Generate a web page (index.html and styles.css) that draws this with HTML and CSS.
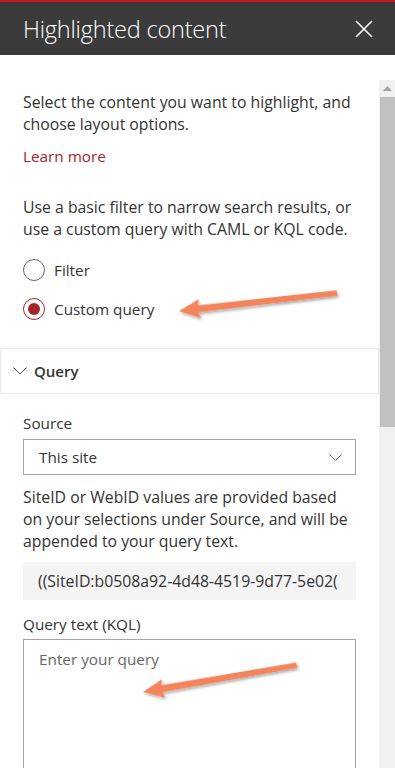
FILE: index.html
```html
<!DOCTYPE html>
<html lang="en">
<head>
    <meta charset="UTF-8">
    <meta name="viewport" content="width=device-width, initial-scale=1.0">
    <title>Highlighted content</title>
    <link rel="stylesheet" href="styles.css">
</head>
<body>
    <div class="panel">
        <div class="panel-header">
            <h1 class="panel-title">Highlighted content</h1>
            <svg class="close-icon" width="18" height="18" viewBox="0 0 18 18">
                <path d="M1 1 L17 17 M17 1 L1 17" stroke="#fff" stroke-width="1.6" fill="none"/>
            </svg>
        </div>
        <div class="panel-body">
            <div class="content">
                <p class="text intro">Select the content you want to highlight, and choose layout options.</p>
                <a class="learn-more" href="#">Learn more</a>
                <p class="text filter-note">Use a basic filter to narrow search results, or use a custom query with CAML or KQL code.</p>

                <div class="radio-group">
                    <div class="radio">
                        <span class="radio-circle"></span>
                        <span class="radio-label">Filter</span>
                    </div>
                    <div class="radio checked">
                        <span class="radio-circle"></span>
                        <span class="radio-label">Custom query</span>
                    </div>
                </div>

                <div class="section-head">
                    <svg class="section-chevron" width="14" height="8" viewBox="0 0 14 8">
                        <path d="M0.5 0.5 L7 7 L13.5 0.5" stroke="#555" stroke-width="1" fill="none"/>
                    </svg>
                    <span class="section-title">Query</span>
                </div>

                <div class="fields">
                    <label class="field-label">Source</label>
                    <div class="dropdown">
                        <span>This site</span>
                        <svg width="13" height="7" viewBox="0 0 13 7">
                            <path d="M0.5 0.5 L6.5 6.5 L12.5 0.5" stroke="#666" stroke-width="1" fill="none"/>
                        </svg>
                    </div>
                    <p class="text site-note">SiteID or WebID values are provided based on your selections under Source, and will be appended to your query text.</p>
                    <div class="readonly">((SiteID:b0508a92-4d48-4519-9d77-5e02(</div>
                    <label class="field-label kql-label">Query text (KQL)</label>
                    <div class="textarea">Enter your query</div>
                </div>
            </div>
            <div class="scrollbar">
                <div class="scroll-up">
                    <svg width="9" height="5" viewBox="0 0 9 5"><path d="M0 5 L4.5 0 L9 5 Z" fill="#a3a3a3"/></svg>
                </div>
                <div class="scroll-thumb"></div>
            </div>
        </div>

        <svg class="callouts" width="395" height="768" viewBox="0 0 395 768">
            <defs>
                <filter id="shade" x="-10%" y="-50%" width="120%" height="200%">
                    <feDropShadow dx="1" dy="2" stdDeviation="1.5" flood-color="#000" flood-opacity="0.35"/>
                </filter>
            </defs>
            <g transform="translate(179 311) rotate(-6.5)" filter="url(#shade)">
                <polygon points="0,0 21,-9.5 19,-3.4 159,-2.8 159,2.8 19,3.4 21,9.5" fill="#f4845c"/>
            </g>
            <g transform="translate(143 692) rotate(-9.9)" filter="url(#shade)">
                <polygon points="0,0 21,-9.5 19,-3.4 156,-2.8 156,2.8 19,3.4 21,9.5" fill="#f4845c"/>
            </g>
        </svg>
    </div>
</body>
</html>
```

FILE: styles.css
```css
html, body {
    margin: 0;
    height: 100%;
    overflow: hidden;
    background-color: #ffffff;
    font-family: "Open Sans", "Noto Sans", sans-serif;
}
.panel {
    position: relative;
    width: 395px;
    height: 768px;
    overflow: hidden;
}
.panel-header {
    display: flex;
    justify-content: space-between;
    align-items: center;
    height: 53px;
    border-top: 2px solid #c8171e;
    background-color: #3b3b3b;
    padding: 0 22px 0 23px;
}
.panel-title {
    margin: 0;
    font-size: 23.5px;
    font-weight: 300;
    color: #ffffff;
    letter-spacing: -0.2px;
}
.close-icon {
    display: block;
}
.panel-body {
    display: flex;
}
.content {
    width: 379px;
    padding-top: 36px;
}
.scrollbar {
    width: 16px;
    margin-top: 25px;
    height: 700px;
    background-color: #f0f0f0;
}
.scroll-up {
    display: flex;
    justify-content: center;
    align-items: center;
    height: 17px;
}
.scroll-thumb {
    height: 330px;
    margin-left: 1px;
    background-color: #c1c1c1;
}
.text {
    margin: 0;
    padding: 0 23px;
    font-size: 15.8px;
    line-height: 22px;
    color: #333333;
}
.learn-more {
    display: block;
    margin: 10px 23px 0;
    font-size: 15.3px;
    line-height: 22px;
    color: #a4262c;
    text-decoration: none;
}
.filter-note {
    margin-top: 29px;
}
.radio-group {
    display: flex;
    flex-direction: column;
    gap: 17px;
    margin-top: 19px;
    padding: 0 23px;
}
.radio {
    display: flex;
    align-items: center;
    gap: 9px;
    height: 22px;
}
.radio-circle {
    box-sizing: border-box;
    width: 22px;
    height: 22px;
    border: 1.5px solid #666666;
    border-radius: 50%;
    display: flex;
    justify-content: center;
    align-items: center;
}
.radio.checked .radio-circle {
    border-color: #a4262c;
}
.radio.checked .radio-circle::after {
    content: "";
    width: 12px;
    height: 12px;
    border-radius: 50%;
    background-color: #a4262c;
}
.radio-label {
    font-size: 15.3px;
    color: #333333;
}
.section-head {
    display: flex;
    align-items: center;
    gap: 7px;
    height: 44px;
    margin-top: 28px;
    padding-left: 12px;
    border: 1px solid #eaeaea;
}
.section-title {
    font-size: 15px;
    font-weight: 600;
    color: #333333;
}
.fields {
    display: flex;
    flex-direction: column;
    padding: 18px 23px 0;
}
.field-label {
    font-size: 15.3px;
    line-height: 22px;
    color: #333333;
}
.dropdown {
    display: flex;
    justify-content: space-between;
    align-items: center;
    height: 34px;
    margin-top: 5px;
    padding: 0 13px 0 15px;
    border: 1px solid #a6a6a6;
    font-size: 15.3px;
    color: #333333;
}
.site-note {
    margin-top: 11px;
    padding: 0;
}
.readonly {
    height: 38px;
    margin-top: 10px;
    padding: 0 0 0 15px;
    line-height: 38px;
    background-color: #f4f4f4;
    font-size: 15.8px;
    color: #333333;
    white-space: nowrap;
    overflow: hidden;
}
.kql-label {
    margin-top: 13px;
}
.textarea {
    height: 200px;
    margin-top: 4px;
    padding: 8px 15px;
    border: 1px solid #a6a6a6;
    font-size: 15.3px;
    line-height: 22px;
    color: #666666;
}
.callouts {
    position: absolute;
    top: 0;
    left: 0;
    pointer-events: none;
}
```
